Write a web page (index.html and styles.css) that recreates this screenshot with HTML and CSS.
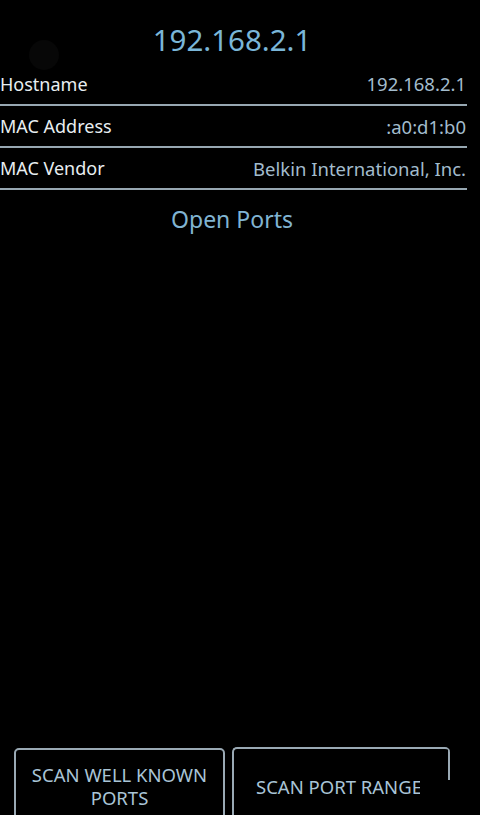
FILE: index.html
```html
<!DOCTYPE html>
<html lang="en">
<head>
    <meta charset="UTF-8">
    <meta name="viewport" content="width=device-width, initial-scale=1.0">
    <title>192.168.2.1</title>
    <link rel="stylesheet" href="styles.css">
</head>
<body>
    <div class="screen">
        <span class="touch-dot"></span>
        <h1 class="host-title">192.168.2.1</h1>
        <div class="info-list">
            <div class="info-row">
                <span class="info-label">Hostname</span>
                <span class="info-value">192.168.2.1</span>
            </div>
            <div class="info-row">
                <span class="info-label">MAC Address</span>
                <span class="info-value">:a0:d1:b0</span>
            </div>
            <div class="info-row">
                <span class="info-label">MAC Vendor</span>
                <span class="info-value">Belkin International, Inc.</span>
            </div>
        </div>
        <h2 class="section-title">Open Ports</h2>
        <div class="ports-list"></div>
        <div class="button-bar">
            <button type="button" class="scan-button scan-known">SCAN WELL KNOWN<br>PORTS</button>
            <button type="button" class="scan-button scan-range"><span class="clip-label">SCAN PORT RANGE</span></button>
        </div>
    </div>
</body>
</html>
```

FILE: styles.css
```css
body {
    margin: 0;
    padding: 0;
    background-color: #000;
    font-family: "Noto Sans", "Open Sans", sans-serif;
    overflow: hidden;
}
.screen {
    position: relative;
    width: 480px;
    height: 815px;
    display: flex;
    flex-direction: column;
    overflow: hidden;
}
.touch-dot {
    position: absolute;
    left: 29px;
    top: 40px;
    width: 30px;
    height: 30px;
    border-radius: 50%;
    background-color: #070707;
}
.host-title {
    margin: 20px 0 0;
    height: 43px;
    line-height: 40px;
    font-size: 29.5px;
    font-weight: normal;
    text-align: center;
    color: #7ab6d8;
    padding-right: 16px;
}
.info-list {
    padding-right: 13px;
}
.info-row {
    display: flex;
    justify-content: space-between;
    align-items: center;
    height: 40px;
    border-bottom: 2px solid #97a7b2;
}
.info-row:first-child {
    height: 41px;
}
.info-label {
    font-size: 18px;
    color: #e8eef1;
}
.info-value {
    font-size: 18.5px;
    color: #a3bccd;
    padding-right: 1px;
}
.section-title {
    margin: 13px 0 0;
    font-size: 23px;
    font-weight: normal;
    text-align: center;
    color: #80b4d2;
    padding-right: 16px;
}
.ports-list {
    flex: 1;
}
.button-bar {
    display: flex;
    gap: 7px;
    padding-left: 14px;
    height: 67px;
}
.scan-button {
    flex: none;
    height: 78px;
    padding: 0;
    background: transparent;
    border: 2px solid #9aa9b4;
    border-radius: 5px;
    font-family: inherit;
    font-size: 18.5px;
    line-height: 23px;
    color: #a9c4d6;
    display: flex;
    align-items: center;
    justify-content: center;
    text-align: center;
}
.scan-known {
    width: 211px;
    padding-bottom: 2px;
}
.scan-range {
    width: 218px;
    margin-top: -1px;
    padding-left: 22px;
    justify-content: flex-start;
    border-right: none;
    border-top-right-radius: 5px;
    background: linear-gradient(#9aa9b4, #9aa9b4) right top / 2px 31px no-repeat;
}
.clip-label {
    display: block;
    width: 164px;
    overflow: hidden;
    white-space: nowrap;
    text-align: left;
}
```
